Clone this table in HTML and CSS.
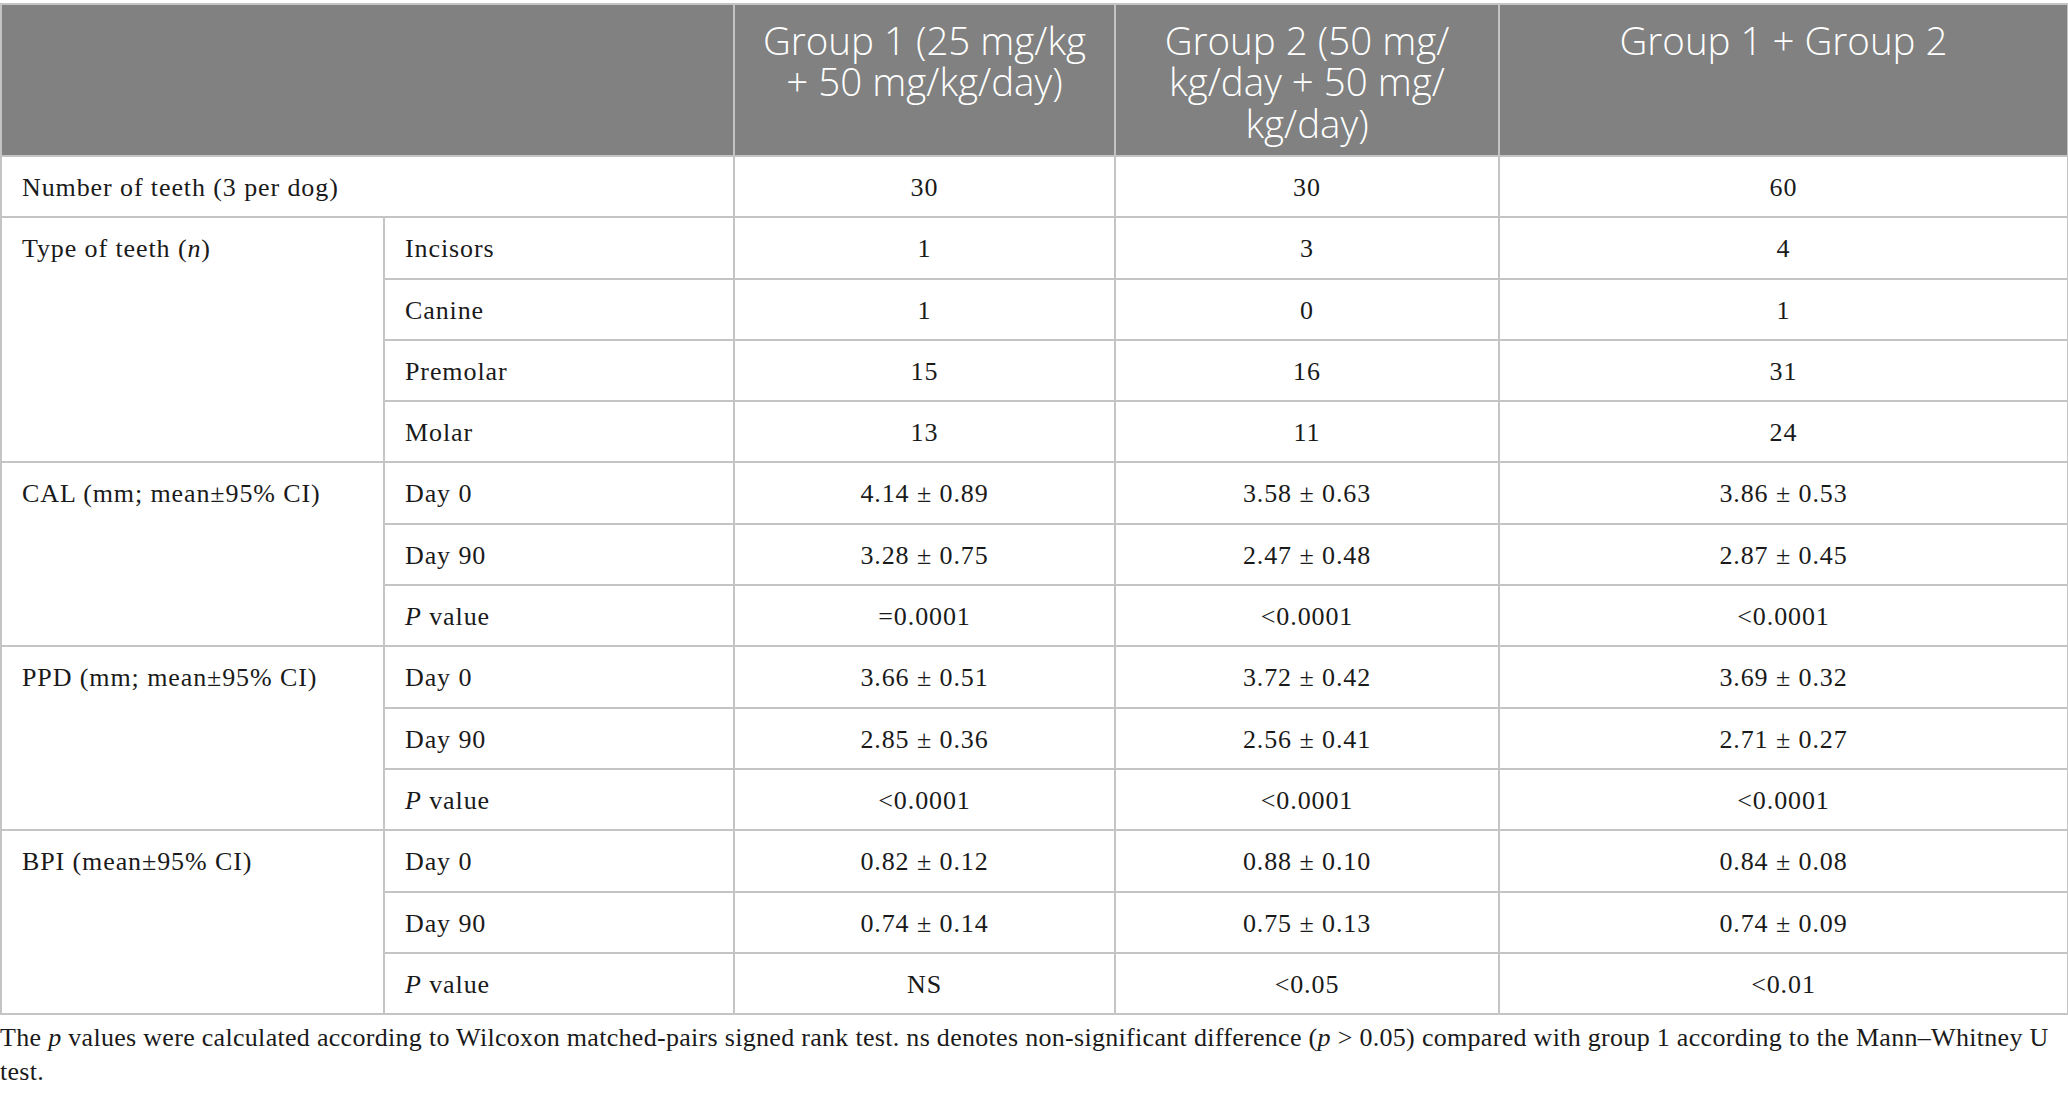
FILE: index.html
```html
<!DOCTYPE html>
<html lang="en">
<head>
<meta charset="utf-8">
<title>Table</title>
<link rel="stylesheet" href="styles.css">
</head>
<body>
<div class="page">
<table class="data">
<colgroup>
<col class="c1"><col class="c2"><col class="c3"><col class="c4"><col class="c5">
</colgroup>
<thead>
<tr>
<th colspan="2"></th>
<th>Group 1 (25 mg/kg<br>+ 50 mg/kg/day)</th>
<th>Group 2 (50 mg/<br>kg/day + 50 mg/<br>kg/day)</th>
<th>Group 1 + Group 2</th>
</tr>
</thead>
<tbody>
<tr><td colspan="2">Number of teeth (3 per dog)</td><td class="n">30</td><td class="n">30</td><td class="n">60</td></tr>
<tr><td rowspan="4">Type of teeth (<i>n</i>)</td><td>Incisors</td><td class="n">1</td><td class="n">3</td><td class="n">4</td></tr>
<tr><td>Canine</td><td class="n">1</td><td class="n">0</td><td class="n">1</td></tr>
<tr><td>Premolar</td><td class="n">15</td><td class="n">16</td><td class="n">31</td></tr>
<tr><td>Molar</td><td class="n">13</td><td class="n">11</td><td class="n">24</td></tr>
<tr><td rowspan="3">CAL (mm; mean±95% CI)</td><td>Day 0</td><td class="n">4.14 ± 0.89</td><td class="n">3.58 ± 0.63</td><td class="n">3.86 ± 0.53</td></tr>
<tr><td>Day 90</td><td class="n">3.28 ± 0.75</td><td class="n">2.47 ± 0.48</td><td class="n">2.87 ± 0.45</td></tr>
<tr><td><i>P</i> value</td><td class="n">=0.0001</td><td class="n">&lt;0.0001</td><td class="n">&lt;0.0001</td></tr>
<tr><td rowspan="3">PPD (mm; mean±95% CI)</td><td>Day 0</td><td class="n">3.66 ± 0.51</td><td class="n">3.72 ± 0.42</td><td class="n">3.69 ± 0.32</td></tr>
<tr><td>Day 90</td><td class="n">2.85 ± 0.36</td><td class="n">2.56 ± 0.41</td><td class="n">2.71 ± 0.27</td></tr>
<tr><td><i>P</i> value</td><td class="n">&lt;0.0001</td><td class="n">&lt;0.0001</td><td class="n">&lt;0.0001</td></tr>
<tr><td rowspan="3">BPI (mean±95% CI)</td><td>Day 0</td><td class="n">0.82 ± 0.12</td><td class="n">0.88 ± 0.10</td><td class="n">0.84 ± 0.08</td></tr>
<tr><td>Day 90</td><td class="n">0.74 ± 0.14</td><td class="n">0.75 ± 0.13</td><td class="n">0.74 ± 0.09</td></tr>
<tr><td><i>P</i> value</td><td class="n">NS</td><td class="n">&lt;0.05</td><td class="n">&lt;0.01</td></tr>
</tbody>
</table>
<p class="note">The <i>p</i> values were calculated according to Wilcoxon matched-pairs signed rank test. ns denotes non-significant difference (<i>p</i> &gt; 0.05) compared with group 1 according to the Mann–Whitney U test.</p>
</div>
</body>
</html>
```
FILE: styles.css
```css
html, body {
  margin: 0;
  padding: 0;
  background: #ffffff;
}

.page {
  padding-top: 3px;
  width: 2067px;
}

.data {
  width: 2067px;
  border-collapse: collapse;
  table-layout: fixed;
  font-family: "Liberation Serif", "Times New Roman", serif;
  font-size: 26px;
  letter-spacing: 0.9px;
  color: #1a1a1a;
}

.c1 { width: 383px; }
.c2 { width: 350px; }
.c3 { width: 381px; }
.c4 { width: 384px; }
.c5 { width: 569px; }

.data th {
  background: #808180;
  color: #ffffff;
  font-family: "Open Sans", "Liberation Sans", sans-serif;
  font-weight: 300;
  font-size: 38.5px;
  letter-spacing: 0;
  line-height: 41.5px;
  text-align: center;
  vertical-align: top;
  height: 152px;
  box-sizing: border-box;
  padding: 14.5px 12px 6px;
  border: 2px solid #c4c4c4;
}

.data td {
  border: 2px solid #c4c4c4;
  padding: 14px 20px 12.3px;
  line-height: 33px;
  vertical-align: top;
  height: 33px;
  text-align: left;
}

.data td.n {
  text-align: center;
}

.note {
  margin: 6px 0 0;
  font-family: "Liberation Serif", "Times New Roman", serif;
  font-size: 26px;
  line-height: 34px;
  letter-spacing: 0.3px;
  color: #1a1a1a;
}
```
